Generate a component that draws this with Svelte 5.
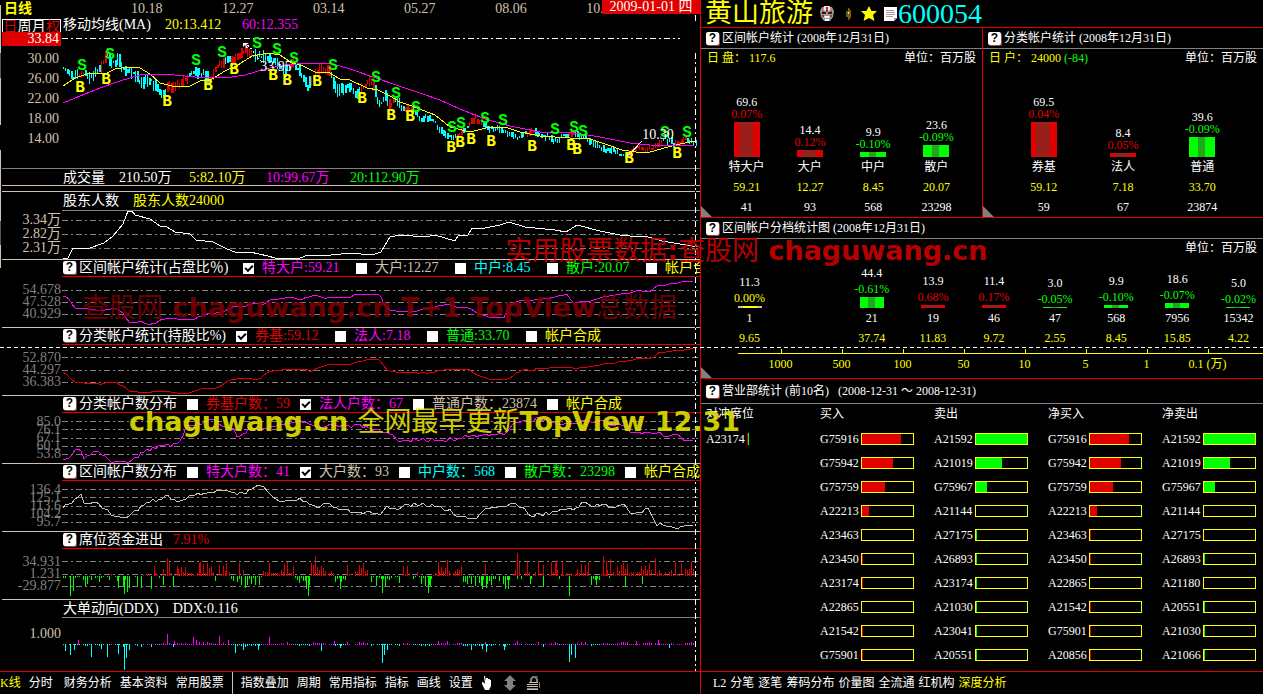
<script lang="ts">
  type Pt = [number, number];

  // chart space: x runs 62..700, y is the row offset inside the terminal
  const X0 = 62;
  const W = 638;

  const dates = ['10.18', '12.27', '03.14', '05.27', '08.06', '10.23'];
  const prices = ['30.00', '26.00', '22.00', '18.00', '14.00'];

  const ma20 = '63,86 75,78 90,73 105,74 115,69 130,67 140,68 150,74 160,83 172,86 188,87 200,81 212,79 225,71 238,65 252,56 268,53 280,55 292,63 303,66 315,72 328,72 340,79 350,80 367,88 378,90 390,96 400,102 412,106 435,115 450,127 470,132 490,127 505,127 520,132 540,136 570,138 590,139 605,144 622,150 636,152 650,152 668,147 680,144 690,142 696,141';
  const ma60 = '63,103 80,96 100,88 120,81 140,75 165,74 195,77 225,78 245,75 265,69 285,65 310,63 333,64 350,69 376,78 396,85 420,93 440,100 460,109 485,119 510,126 540,132 575,133 600,137 630,143 650,145 694,146';

  const pricePath: Pt[] = [[63, 69], [72, 77], [85, 73], [92, 78], [98, 70], [104, 62], [107, 52], [110, 64], [118, 60], [124, 70], [133, 73], [140, 82], [150, 80], [156, 88], [163, 96], [167, 87], [178, 85], [186, 78], [195, 71], [205, 74], [210, 80], [218, 65], [225, 60], [235, 59], [246, 48], [252, 55], [265, 57], [275, 62], [283, 71], [292, 63], [300, 72], [307, 87], [315, 74], [320, 67], [330, 72], [336, 91], [350, 86], [355, 95], [362, 86], [372, 80], [378, 106], [385, 97], [390, 105], [395, 100], [403, 109], [412, 108], [418, 118], [430, 118], [440, 130], [452, 139], [460, 132], [466, 128], [475, 118], [485, 125], [492, 129], [500, 128], [510, 135], [518, 138], [530, 132], [545, 136], [555, 140], [565, 136], [573, 134], [585, 137], [592, 143], [602, 149], [615, 152], [629, 155], [636, 147], [645, 149], [655, 146], [665, 139], [678, 145], [685, 138], [695, 142]];
  const rises: Pt[] = [[78, 84], [101, 106], [166, 188], [208, 224], [230, 252], [290, 293], [311, 330], [360, 374], [388, 393], [405, 412], [456, 461], [468, 482], [526, 534], [568, 574], [628, 662], [674, 686]];

  const sells: Pt[] = [[82, 65], [110, 54], [196, 60], [222, 52], [257, 43], [277, 49], [294, 58], [333, 65], [376, 77], [396, 93], [416, 107], [452, 127], [461, 123], [485, 118], [503, 120], [555, 129], [574, 127], [583, 131], [665, 132], [687, 132]];
  const buys: Pt[] = [[80, 87], [106, 79], [167, 101], [208, 85], [234, 69], [273, 75], [287, 80], [317, 81], [362, 98], [391, 115], [410, 116], [451, 147], [460, 142], [471, 139], [491, 141], [532, 146], [571, 145], [577, 149], [629, 158], [677, 153]];

  const rnd = (n: number) => {
    const v = Math.sin(n * 12.9898) * 43758.5453;
    return v - Math.floor(v);
  };

  function at(path: Pt[], x: number) {
    const i = path.findIndex((p) => p[0] >= x);
    if (i <= 0) return path[0][1];
    const [xa, ya] = path[i - 1];
    const [xb, yb] = path[i];
    return ya + ((yb - ya) * (x - xa)) / (xb - xa);
  }

  // daily wobble on top of a coarse line
  function rough(points: string, amount: number) {
    const path = points.split(' ').map((p) => p.split(',').map(Number) as Pt);
    const out: string[] = [];
    for (let x = 63; x <= 694; x += 3) {
      out.push(`${x},${Math.round(at(path, x) + (rnd(x + 17) - 0.5) * amount)}`);
    }
    return out.join(' ');
  }

  // one candle every 2px, red inside the rising stretches
  const candles: { x: number; y: number; w: number; h: number; up: boolean }[] = [];
  for (let x = 63; x < 696; x += 2) {
    const span = x < 400 ? 11 : 5;
    const h = Math.round(2 + rnd(x) * span);
    candles.push({
      x,
      y: Math.round(at(pricePath, x) - h / 2 + (rnd(x + 7) - 0.5) * 4),
      w: rnd(x + 23) > 0.6 ? 2 : 1,
      h,
      up: rises.some(([a, b]) => x >= a && x <= b)
    });
  }

  const seatPeaks: Pt[] = [[154, 10], [167, 18], [169, 14], [178, 7], [200, 14], [219, 11], [226, 13], [239, 13], [269, 13], [284, 12], [293, 10], [311, 13], [315, 20], [438, 14], [447, 16], [517, 23], [519, 14], [527, 14], [538, 14], [543, 11], [551, 14], [556, 16], [562, 14], [588, 14], [603, 20], [606, 15], [610, 17], [617, 10], [641, 10], [655, 18], [675, 14], [681, 13], [70, -20], [73, -15], [118, -12], [124, -18], [127, -16], [129, -12], [163, -9], [306, -13], [308, -20], [340, -13], [376, -10], [382, -17], [385, -10], [428, -17], [430, -10], [471, -8], [482, -13], [486, -12], [505, -9], [508, -13], [530, -8], [569, -20], [596, -9], [625, -11], [642, -8]];
  const ddxPeaks: Pt[] = [[78, 5], [167, 11], [174, 4], [193, 8], [196, 5], [219, 9], [228, 5], [269, 8], [334, 4], [438, 4], [447, 4], [517, 4], [538, 3], [636, 4], [658, 5], [65, -7], [70, -11], [74, -6], [91, -13], [101, -5], [107, -13], [118, -10], [124, -26], [126, -14], [129, -6], [235, -9], [243, -6], [258, -6], [321, -7], [340, -4], [382, -19], [384, -11], [387, -6], [471, -6], [482, -5], [486, -8], [504, -6], [569, -18], [571, -11], [575, -14], [669, -4]];

  const falling: Pt[] = [[60, 141], [230, 262], [295, 310], [335, 345], [373, 402], [413, 430], [462, 512], [590, 600]];

  function bars(peaks: Pt[], low: number) {
    const out: Pt[] = [];
    for (let x = 63; x < 697; x += 2) {
      if (rnd(x + 31) < 0.2) continue;
      const down = falling.some(([a, b]) => x >= a && x <= b);
      const sign = rnd(x + 11) < (down ? 0.95 : 0.08) ? -1 : 1;
      out.push([x, sign * Math.ceil(rnd(x + 5) * rnd(x + 9) * low)]);
    }
    return [...out, ...peaks];
  }

  const seatBars = bars(seatPeaks, 15);
  const ddxBars = bars(ddxPeaks, 3);

  type Item = { text: string; color: string; checked?: boolean };
  const panels: {
    top: number; title: string; axis: string[]; grid: number[]; color: string; line: string; dense?: boolean; items: Item[];
  }[] = [
    {
      top: 277,
      title: '区间帐户统计(占盘比％)',
      axis: ['54.678', '47.528', '40.929'],
      grid: [290, 302, 314],
      color: 'magenta',
      line: '63,296 68,298 75,308 85,308 95,310 105,310 115,307 122,312 130,323 140,321 148,325 158,322 163,319 172,318 185,319 195,319 203,314 222,312 235,306 243,306 255,303 265,304 272,299 290,297 300,299 315,295 325,298 335,297 350,297 358,294 380,294 385,306 390,310 410,312 425,309 447,304 452,306 468,308 480,314 490,317 505,318 508,306 520,301 550,298 567,294 572,302 590,301 610,295 630,293 640,290 650,292 655,286 670,284 685,281 694,281',
      items: [
        { text: '特大户:59.21', color: 'magenta', checked: true },
        { text: '大户:12.27', color: 'tan' },
        { text: '中户:8.45', color: 'cyan' },
        { text: '散户:20.07', color: 'green' },
        { text: '帐户合成', color: 'yellow' }
      ]
    },
    {
      top: 345,
      title: '分类帐户统计(持股比%)',
      axis: ['52.870', '44.297', '36.383'],
      grid: [357, 370, 382],
      color: 'red',
      line: '63,372 68,376 74,382 100,384 112,381 122,385 130,391 145,393 160,391 190,393 203,388 218,388 228,381 240,378 260,379 270,371 285,369 305,369 310,371 325,365 350,364 370,359 379,359 388,371 430,373 447,369 468,369 475,374 488,379 508,379 522,370 560,367 580,368 605,364 625,361 640,358 650,359 660,352 680,350 694,348',
      items: [
        { text: '券基:59.12', color: 'red', checked: true },
        { text: '法人:7.18', color: 'magenta' },
        { text: '普通:33.70', color: 'green' },
        { text: '帐户合成', color: 'yellow' }
      ]
    },
    {
      top: 413,
      title: '分类帐户数分布',
      axis: ['85.0', '76.1', '67.1', '60.1', '53.8'],
      grid: [421, 429, 438, 446, 454],
      color: 'magenta',
      dense: true,
      line: '63,459 68,460 73,451 78,448 84,457 97,452 104,453 110,460 125,461 135,459 142,452 155,448 166,444 171,447 182,438 186,427 200,424 213,418 220,426 233,428 239,438 247,430 265,429 280,423 300,421 312,424 320,427 335,425 350,427 358,424 370,429 390,433 400,441 420,439 440,440 460,438 470,436 495,434 505,434 512,425 540,418 560,426 580,421 600,421 620,425 632,432 650,433 658,431 668,437 678,434 684,440 694,439',
      items: [
        { text: '券基户数：59', color: 'red' },
        { text: '法人户数：67', color: 'magenta', checked: true },
        { text: '普通户数：23874', color: 'tan' },
        { text: '帐户合成', color: 'yellow' }
      ]
    },
    {
      top: 481,
      title: '区间帐户数分布',
      axis: ['136.4', '125.1', '113.6', '104.2', '95.7'],
      grid: [489, 497, 506, 514, 522],
      color: 'tan',
      dense: true,
      line: '63,507 70,503 75,499 80,494 85,503 98,504 107,508 112,514 124,517 133,513 140,508 150,501 163,500 166,493 170,500 185,500 194,494 207,493 225,490 233,493 245,493 259,484 268,493 280,500 298,499 312,504 320,507 323,502 338,508 350,511 358,513 372,512 379,516 386,506 393,509 405,505 420,504 435,506 445,508 455,514 466,518 475,519 482,511 487,508 500,507 512,503 520,508 532,515 545,514 555,512 570,509 575,508 584,502 590,505 610,506 625,506 632,514 648,509 655,520 656,525 662,523 668,526 675,529 684,525 694,524',
      items: [
        { text: '特大户数：41', color: 'magenta' },
        { text: '大户数：93', color: 'tan', checked: true },
        { text: '中户数：568', color: 'cyan' },
        { text: '散户数：23298', color: 'green' },
        { text: '帐户合成', color: 'yellow' }
      ]
    }
  ];

  const holders = '63,258 68,258 73,248 90,248 104,243 113,236 123,224 128,211 132,211 135,215 150,219 160,226 167,227 175,232 190,234 196,240 213,242 227,249 235,252 250,252 268,256 275,258 300,258 308,255 322,256 350,253 372,255 381,252 390,237 400,235 425,237 435,235 455,241 458,236 468,235 472,228 480,229 500,225 509,222 525,227 555,230 566,232 577,225 600,231 620,235 640,237 645,236 662,241 680,244 698,247';

  type Col = { value: string; pct: string; tone: string; h: number; rows: string[] };
  const range: Col[] = [
    { value: '69.6', pct: '0.07%', tone: 'red', h: 35, rows: ['特大户', '59.21', '41'] },
    { value: '14.4', pct: '0.12%', tone: 'red', h: 7, rows: ['大户', '12.27', '93'] },
    { value: '9.9', pct: '-0.10%', tone: 'green', h: 5, rows: ['中户', '8.45', '568'] },
    { value: '23.6', pct: '-0.09%', tone: 'green', h: 12, rows: ['散户', '20.07', '23298'] }
  ];
  const kinds: Col[] = [
    { value: '69.5', pct: '0.04%', tone: 'red', h: 35, rows: ['券基', '59.12', '59'] },
    { value: '8.4', pct: '0.05%', tone: 'red', h: 4, rows: ['法人', '7.18', '67'] },
    { value: '39.6', pct: '-0.09%', tone: 'green', h: 20, rows: ['普通', '33.70', '23874'] }
  ];
  const tiers: (Col | null)[] = [
    { value: '11.3', pct: '0.00%', tone: 'yellow', h: 2, rows: ['1', '9.65'] },
    null,
    { value: '44.4', pct: '-0.61%', tone: 'green', h: 11, rows: ['21', '37.74'] },
    { value: '13.9', pct: '0.68%', tone: 'red', h: 3, rows: ['19', '11.83'] },
    { value: '11.4', pct: '0.17%', tone: 'red', h: 3, rows: ['46', '9.72'] },
    { value: '3.0', pct: '-0.05%', tone: 'green', h: 1, rows: ['47', '2.55'] },
    { value: '9.9', pct: '-0.10%', tone: 'green', h: 3, rows: ['568', '8.45'] },
    { value: '18.6', pct: '-0.07%', tone: 'green', h: 5, rows: ['7956', '15.85'] },
    { value: '5.0', pct: '-0.02%', tone: 'green', h: 1, rows: ['15342', '4.22'] }
  ];
  const scale = ['1000', '500', '100', '50', '10', '5', '1', '0.1 (万)'];

  const seatHeads = ['对冲席位', '买入', '卖出', '净买入', '净卖出'];
  const seatCols: { tone: string; rows: [string, number][] }[] = [
    { tone: 'red', rows: [['G75916', 77], ['G75942', 60], ['G75759', 45], ['A22213', 14], ['A23463', 0], ['A23450', 2], ['A23174', 2], ['A22865', 0], ['A21542', 2], ['G75901', 2]] },
    { tone: 'green', rows: [['A21592', 100], ['A21019', 50], ['G75967', 21], ['A21144', 0], ['A27175', 2], ['A26893', 2], ['A23174', 2], ['A21030', 2], ['A23041', 2], ['A20551', 2]] },
    { tone: 'red', rows: [['G75916', 77], ['G75942', 60], ['G75759', 45], ['A22213', 14], ['A23463', 2], ['A23450', 2], ['A22865', 0], ['A21542', 2], ['G75901', 2], ['A20856', 2]] },
    { tone: 'green', rows: [['A21592', 100], ['A21019', 50], ['G75967', 21], ['A21144', 0], ['A27175', 0], ['A26893', 2], ['A21180', 0], ['A20551', 2], ['A21030', 2], ['A21066', 2]] }
  ];

  const pct = (x: number) => ((x - X0) / W) * 100;

  // text occupies terminal cells: 7px for ascii, 14px for full width
  const cells = (t: string) => [...t].reduce((n, c) => n + (c.charCodeAt(0) < 256 ? 7 : 14), 0);
</script>

{#snippet help()}
  <button class="help" aria-label="帮助">?</button>
{/snippet}

{#snippet cell(text: string, color: string)}
  <span class={color} style="min-width: {cells(text)}px">{text}</span>
{/snippet}

{#snippet gridLines(ys: number[])}
  {#each ys as y}
    <line class="grid-line" x1={X0} x2={X0 + W} y1={y + 0.5} y2={y + 0.5} />
  {/each}
{/snippet}

{#snippet column(c: Col)}
  <div class="col">
    <span class="num">{c.value}</span>
    <span class="num {c.tone}">{c.pct}</span>
    <div class="bar bar-{c.tone}" style="height: {c.h}px"></div>
    {#each c.rows as r}
      <span class="row" class:yellow={r.includes('.')}>{r}</span>
    {/each}
  </div>
{/snippet}

<main class="terminal">
  <div class="left">
    <header class="dates">
      <strong class="yellow">日线</strong>
      <div class="date-list">
        {#each dates as d}<span>{d}</span>{/each}
      </div>
      <div class="today">2009-01-01 四</div>
    </header>

    <section class="kline">
      <div class="axis price">
        <div class="tabs">
          <button class="red">日</button><button>周</button><button>月</button><button class="red">权</button>
        </div>
        <span class="current">33.84</span>
        {#each prices as p}<span>{p}</span>{/each}
      </div>
      <div class="plot">
        <div class="title">
          {@render cell('移动均线(MA)', 'white')}
          {@render cell('20:13.412', 'yellow')}
          {@render cell('60:12.355', 'magenta')}
        </div>
        <div class="canvas">
          <svg height="136" viewBox="{X0} 32 {W} 136" preserveAspectRatio="none">
            <line class="top-line" x1={X0} x2="680" y1="38.5" y2="38.5" />
            {#each candles as c}
              <rect class={c.up ? 'red' : 'cyan'} x={c.x} y={c.y} width={c.w} height={c.h} />
            {/each}
            <polyline class="yellow" points={ma20} />
            <polyline class="magenta" points={ma60} />
            <polyline class="white" points="244,43 250,47 258,58 262,62" stroke-dasharray="2 2" />
            <path class="white-fill" d="M243 43h6l-3 2 2 3h-2l-1-3-2 2z" />
            <line class="white" x1="629" x2="642" y1="155" y2="141" />
          </svg>
          {#each sells as [x, y]}<b class="mark green" style="left: {pct(x)}%; top: {y - 31}px">S</b>{/each}
          <span class="mark peak" style="left: {pct(276)}%; top: 35px">33.95</span>
          <span class="mark peak" style="left: {pct(658)}%; top: 103px">10.30</span>
          {#each buys as [x, y]}<b class="mark yellow" style="left: {pct(x)}%; top: {y - 31}px">B</b>{/each}
        </div>
      </div>
    </section>

    <div class="volume title">
      {@render cell('成交量', 'white')}
      {@render cell('210.50万', 'white')}
      {@render cell('5:82.10万', 'yellow')}
      {@render cell('10:99.67万', 'magenta')}
      {@render cell('20:112.90万', 'green')}
    </div>

    <section class="panel holders">
      <div class="title">
        {@render cell('股东人数', 'white')}
        {@render cell('股东人数24000', 'yellow')}
      </div>
      <div class="axis"><span>3.34万</span><span>2.82万</span><span>2.31万</span></div>
      <svg height="48" viewBox="{X0} 211 {W} 48" preserveAspectRatio="none">
        {@render gridLines([220, 234, 248])}
        <polyline class="white" points={holders} />
      </svg>
    </section>

    {#each panels as p}
      <section class="panel">
        <div class="title options">
          {@render help()}
          {@render cell(p.title, 'white')}
          {#each p.items as it}
            <label class={it.color}>
              <input type="checkbox" checked={it.checked} />
              {@render cell(it.text, it.color)}
            </label>
          {/each}
        </div>
        <div class="axis gray" class:dense={p.dense}>
          {#each p.axis as a}<span>{a}</span>{/each}
        </div>
        <svg height="50" viewBox="{X0} {p.top} {W} 50" preserveAspectRatio="none">
          {@render gridLines(p.grid)}
          <polyline class={p.color} points={rough(p.line, p.dense ? 4 : 1)} />
        </svg>
      </section>
    {/each}

    <section class="panel">
      <div class="title options">
        {@render help()}
        {@render cell('席位资金进出', 'white')}
        {@render cell('7.91%', 'red')}
      </div>
      <div class="axis gray"><span>34.931</span><span>1.231</span><span>-29.877</span></div>
      <svg height="50" viewBox="{X0} 549 {W} 50" preserveAspectRatio="none">
        {@render gridLines([561, 574, 586])}
        {#each seatBars as [x, h]}
          <rect class={h > 0 ? 'red' : 'green'} {x} y={h > 0 ? 576 - h : 576} width="1" height={Math.abs(h)} />
        {/each}
      </svg>
    </section>

    <section class="panel ddx">
      <div class="title">
        {@render cell('大单动向(DDX)', 'white')}
        {@render cell('DDX:0.116', 'white')}
      </div>
      <div class="axis"><span>1.000</span></div>
      <svg height="53" viewBox="{X0} 618 {W} 53" preserveAspectRatio="none">
        {#each ddxBars as [x, h]}
          <rect class={h > 0 ? 'magenta' : 'cyan'} {x} y={h > 0 ? 645 - h : 644} width="1" height={Math.abs(h)} />
        {/each}
      </svg>
    </section>

    <nav class="toolbar">
      <button class="yellow">K线</button>
      <button>分时</button>
      <button class="gap">财务分析</button>
      <button>基本资料</button>
      <button>常用股票</button>
      <i class="sep"></i>
      <button>指数叠加</button>
      <button>周期</button>
      <button>常用指标</button>
      <button>指标</button>
      <button>画线</button>
      <button>设置</button>
      <button aria-label="拖动">
        <svg width="12" height="14" viewBox="0 0 12 14"><path fill="#fff" d="M3 0h1l1 5V2h2v3-2h2v3-2h1v6l-2 4H4L1 8V6h1l2 2z" /></svg>
      </button>
      <button class="gap" aria-label="缩放">
        <svg width="12" height="16" viewBox="0 0 12 16"><path fill="#808080" d="M6 0l6 6H9v4h3l-6 6-6-6h3V6H0z" /></svg>
      </button>
      <button class="gap" aria-label="锁定">
        <svg width="14" height="14" viewBox="0 0 14 14">
          <path d="M4 6V3l2-2h2l2 2v3" fill="none" stroke="#808080" stroke-width="2" />
          <path d="M2 6.500h9M0 8.500h11M0 10.500h11M0 13.500h11" stroke="#d0c0b0" />
          <path d="M0 12.500h11M12.500 6v6" stroke="#808080" />
          <path d="M9 1l2-1" stroke="#20a8a0" />
        </svg>
      </button>
    </nav>
    <i class="cross-v top"></i>
    <i class="cross-v"></i>
  </div>

  <div class="right">
    <header class="stock">
      <h1>黄山旅游</h1>
      <svg class="mask" width="14" height="16" viewBox="0 0 14 16">
        <path d="M2 1h10l2 4-1 6-3 4H4l-3-4-1-6z" fill="#999" />
        <path d="M4 0h6v4L7 6 4 4z" fill="#e8e8e8" />
        <path d="M6 1h2v5H6zM2 4l3 3-3-1zM12 4L9 7l3-1zM2 9h2v2H2zM10 9h2v2h-2z" fill="#d02020" />
        <path d="M2 6h4v2H2zM8 6h4v2H8z" fill="#222" />
        <path d="M4 10h6l-1 2H5zM5 13h4v2H5z" fill="#fff" />
      </svg>
      <svg class="coin" width="6" height="14" viewBox="0 0 6 14">
        <path d="M3 1h1l2 3v6l-2 3H3z" fill="#806000" /><path d="M1 4h2v6H1z" fill="#705818" /><path d="M3 5h1v2H3z" fill="#ddd" />
      </svg>
      <svg class="star" width="16" height="16" viewBox="0 0 16 16"><path fill="#ff0" d="M8 0l2.500 5H16l-4 4 1.500 6L8 12l-5.500 3L4 9 0 5h5.500z" /></svg>
      <svg class="doc" width="13" height="14" viewBox="0 0 13 14">
        <path d="M0 0h13v11l-3 3H0z" fill="#fff" /><path d="M2 3.500h8M2 5.500h9M2 7.500h9M2 9.500h7" stroke="#b09890" /><path d="M10 14v-3h3z" fill="#999" />
      </svg>
      <span class="code">600054</span>
    </header>

    <div class="pair">
      <section class="card">
        <h2>{@render help()}区间帐户统计 (2008年12月31日)</h2>
        <div class="info"><span class="yellow">日 盘： 117.6</span><span>单位：百万股</span></div>
        <div class="cols four">{#each range as c}{@render column(c)}{/each}</div>
      </section>
      <section class="card">
        <h2>{@render help()}分类帐户统计 (2008年12月31日)</h2>
        <div class="info"><span class="yellow">日 户： 24000 <span class="green">(-84)</span></span><span>单位：百万股</span></div>
        <div class="cols three">{#each kinds as c}{@render column(c)}{/each}</div>
      </section>
    </div>

    <section class="card tiers">
      <h2>{@render help()}区间帐户分档统计图 (2008年12月31日)</h2>
      <div class="info"><span></span><span>单位：百万股</span></div>
      <div class="cols nine">
        {#each tiers as c}
          {#if c}{@render column(c)}{:else}<div class="col"></div>{/if}
        {/each}
      </div>
      <div class="scale">
        {#each scale as s}<span>{s}</span>{/each}
      </div>
    </section>

    <section class="card seats">
      <h2>{@render help()}营业部统计 (前10名) &nbsp; (2008-12-31 ～ 2008-12-31)</h2>
      <table>
        <thead>
          <tr>{#each seatHeads as h}<th>{h}</th>{/each}</tr>
        </thead>
        <tbody>
          {#each seatCols[0].rows as _, i}
            <tr>
              <td>
                {#if i === 0}<div class="seat-row"><span>A23174</span><i class="hedge"></i></div>{/if}
              </td>
              {#each seatCols as c}
                <td>
                  <div class="seat-row">
                    <span>{c.rows[i][0]}</span>
                    <div class="meter"><div class="fill-{c.tone}" style="width: {c.rows[i][1]}%"></div></div>
                  </div>
                </td>
              {/each}
            </tr>
          {/each}
        </tbody>
      </table>
    </section>

    <nav class="toolbar tight">
      <button>L2</button>
      <button>分笔</button>
      <button>逐笔</button>
      <button>筹码分布</button>
      <button>价量图</button>
      <button>全流通</button>
      <button>红机构</button>
      <button class="yellow">深度分析</button>
    </nav>
  </div>

  <i class="cross-h"></i>
  <div class="stamp stamp-data"><span>实用股票数据</span>:<span>查股网</span> chaguwang.cn</div>
  <div class="stamp stamp-total"><span>查股网</span> chaguwang.cn T+1 TopView<span>总数据</span></div>
  <div class="stamp stamp-first">chaguwang.cn <span>全网最早更新</span>TopView 12.31</div>
</main>

<style>
  :global(body) {
    background: #000;
  }

  .terminal {
    position: relative;
    display: grid;
    grid-template-columns: 700fr 563fr;
    min-height: 100vh;
    overflow: hidden;
    background: #000;
    color: #fff;
    font: 14px "Liberation Serif", "Noto Sans CJK SC", serif;
    white-space: nowrap;
  }

  button {
    padding: 0;
    border: 0;
    background: none;
    color: #fff;
    font: inherit;
    line-height: inherit;
    cursor: pointer;
  }

  svg {
    display: block;
  }

  .yellow { color: #ff0; }
  .magenta { color: #f0f; }
  .green { color: #0f0; }
  .cyan { color: #0ff; }
  .red { color: #e00000; }
  .tan { color: #d0c0b0; }
  .white { color: #fff; }

  rect {
    fill: currentColor;
  }

  polyline,
  line {
    fill: none;
    stroke: currentColor;
    vector-effect: non-scaling-stroke;
    shape-rendering: crispEdges;
  }

  .white-fill {
    fill: #fff;
  }

  .grid-line {
    stroke: #808080;
    stroke-dasharray: 6 3 2 3;
  }

  .top-line {
    stroke: #fff;
    stroke-dasharray: 6 3 2 3;
  }

  /* left half */
  .left {
    position: relative;
    min-width: 0;
    overflow: hidden;
    background: linear-gradient(#000 5px, #d0c0b0 5px 53px, #555 53px 78px, #d0c0b0 78px 125px, #000 125px 150px, #d0c0b0 150px 221px, #555 221px 245px, #d0c0b0 245px 268px, #000 268px) 0 0 / 1px 100% no-repeat;
  }

  .dates {
    position: relative;
    display: flex;
    height: 17px;
    line-height: 17px;
    color: #d0c0b0;
  }

  .dates strong {
    flex: 0 0 127px;
    padding-left: 4px;
  }

  .date-list {
    display: flex;
    flex: 1;
    overflow: hidden;
  }

  .date-list span {
    flex: 0 0 16%;
  }

  .today {
    position: absolute;
    top: 0;
    right: 0;
    width: 98px;
    height: 14px;
    line-height: 14px;
    text-align: center;
    background: #e00000;
    color: #fff;
  }

  .kline {
    display: grid;
    grid-template-columns: 62px 1fr;
    height: 151px;
  }

  .axis {
    display: flex;
    flex-direction: column;
    padding: 7px 1px 0 0;
    line-height: 12px;
    text-align: right;
    color: #d0c0b0;
  }

  .axis.gray {
    color: #808080;
  }

  .axis.dense {
    padding-top: 5px;
    line-height: 8px;
  }

  .axis.price {
    padding: 2px 1px 0 2px;
    line-height: 20px;
  }

  .axis.price > span {
    padding-right: 2px;
  }

  .tabs {
    display: flex;
    box-sizing: border-box;
    height: 13px;
    border: 1px solid #fff;
    border-bottom: 0;
    line-height: 13px;
  }

  .tabs button {
    flex: 1;
  }

  .tabs .red {
    color: #e00000;
  }

  .axis.price .current {
    height: 14px;
    margin-bottom: 3px;
    line-height: 14px;
    background: #e00000;
    color: #fff;
  }

  .title {
    display: flex;
    gap: 14px;
    height: 15px;
    padding-left: 1px;
    line-height: 15px;
  }

  .canvas {
    position: relative;
    height: 136px;
  }

  .canvas svg,
  .panel > svg {
    width: 100%;
  }

  .mark {
    position: absolute;
    transform: translate(-50%, -50%);
    line-height: 14px;
  }

  .mark:is(b) {
    font-family: "Liberation Mono", monospace;
    font-size: 16px;
  }

  .volume {
    height: 16px;
    margin: 0 0 5px 2px;
    padding-left: 61px;
    border-top: 1px solid #808080;
    border-bottom: 1px solid #d0c0b0;
    line-height: 17px;
  }

  .panel {
    display: grid;
    grid-template-columns: 60px minmax(0, 1fr);
    margin-left: 2px;
    border-top: 1px solid #d0c0b0;
  }

  .panel > .title {
    grid-column: 2;
    height: 18px;
    border-bottom: 1px solid #808080;
    line-height: 17px;
  }

  .panel > .axis {
    grid-column: 1;
  }

  .panel.holders > .axis {
    padding-top: 2px;
    line-height: 14px;
  }

  .panel.ddx > .title {
    height: 17px;
  }

  .panel.ddx > .axis {
    padding-top: 10px;
  }

  .panel > .options {
    gap: 10px;
    height: 16px;
    border-bottom-color: #e00000;
    line-height: 16px;
  }

  .options > .help {
    margin-right: -7px;
  }

  .options label {
    display: flex;
    gap: 8px;
  }

  input[type='checkbox'] {
    appearance: none;
    position: relative;
    width: 11px;
    height: 11px;
    margin: 3px 0 0;
    background: #fff;
  }

  input[type='checkbox']:checked::before {
    content: '';
    position: absolute;
    left: 2px;
    top: 2px;
    width: 6px;
    height: 3px;
    border: solid #000;
    border-width: 0 0 2px 2px;
    transform: rotate(-45deg);
  }

  .help {
    flex: none;
    width: 13px;
    height: 13px;
    margin-top: 1px;
    border-radius: 2px;
    background: #fff;
    box-shadow: 1px 1px 0 #a04038;
    color: #000;
    font: bold 12px/13px "Liberation Sans", sans-serif;
    text-align: center;
  }

  .toolbar {
    display: flex;
    align-items: center;
    gap: 8px;
    height: 22px;
    border-top: 1px solid #e00000;
    font-size: 12px;
    line-height: 22px;
  }

  .toolbar .gap {
    margin-left: 3px;
  }

  .toolbar .yellow {
    color: #ff0;
  }

  .toolbar.tight {
    gap: 4px;
    padding-left: 12px;
  }

  .sep {
    align-self: stretch;
    width: 1px;
    background: #d0c0b0;
  }

  /* crosshair */
  .cross-v {
    position: absolute;
    top: 53px;
    right: 4px;
    bottom: 23px;
    width: 1px;
    background: repeating-linear-gradient(#fff 0 6px, #000 6px 9px, #fff 9px 11px, #000 11px 14px);
  }

  .cross-v.top {
    top: 15px;
    bottom: auto;
    height: 8px;
  }

  .cross-h {
    position: absolute;
    top: 347px;
    left: 0;
    right: 0;
    height: 1px;
    background: repeating-linear-gradient(90deg, #fff 0 4px, #000 4px 7px);
  }

  /* right half */
  .right {
    min-width: 0;
    overflow: hidden;
    border-left: 1px solid #e00000;
    font-size: 12px;
  }

  .stock {
    display: flex;
    align-items: center;
    height: 27px;
    padding-left: 4px;
  }

  .stock h1 {
    margin: 0 7px 0 0;
    font-size: 27px;
    font-weight: normal;
    line-height: 27px;
    color: #ff0;
  }

  .mask { margin-right: 11px; }
  .coin { margin-right: 10px; }
  .star { margin-right: 7px; }
  .doc { margin-right: 1px; }

  .code {
    font-size: 28px;
    line-height: 27px;
    color: #0ff;
  }

  .pair {
    display: grid;
    grid-template-columns: 1fr 1fr;
  }

  .card {
    position: relative;
    min-width: 0;
    border-top: 1px solid #e00000;
  }

  .pair > .card + .card {
    border-left: 1px solid #e00000;
  }

  .pair > .card::after,
  .tiers::after {
    content: '';
    position: absolute;
    left: 0;
    bottom: 0;
    border: solid transparent;
    border-width: 11px 0 0 11px;
    border-left-color: #808080;
  }

  .card h2 {
    display: flex;
    align-items: center;
    gap: 3px;
    height: 20px;
    margin: 0;
    padding-left: 5px;
    border-bottom: 1px solid #808080;
    font-size: 12px;
    font-weight: normal;
    line-height: 20px;
  }

  .card .help {
    margin-top: 0;
  }

  .info {
    display: flex;
    justify-content: space-between;
    height: 18px;
    padding: 0 6px;
    line-height: 18px;
  }

  .cols {
    display: flex;
    height: 150px;
  }

  .cols.four { padding: 0 14px; }
  .cols.three { padding: 0 21px; }

  .cols.nine {
    height: 91px;
    margin-right: -6px;
    padding-left: 18px;
  }

  .col {
    display: flex;
    flex: 1;
    flex-direction: column;
    align-items: center;
    justify-content: flex-end;
  }

  .num {
    line-height: 12px;
  }

  .nine .num {
    line-height: 16px;
  }

  .row {
    line-height: 20px;
  }

  .bar {
    flex: none;
    width: 26px;
    margin-top: 2px;
  }

  .nine .bar {
    width: 24px;
    margin-top: 0;
  }

  .bar-red { background: linear-gradient(90deg, #e00000 20%, #9a1f1a 20% 72%, #e00000 72%); }
  .bar-green { background: linear-gradient(90deg, #0f0 35%, #20a81c 35% 62%, #0f0 62%); }
  .bar-yellow { background: linear-gradient(90deg, #d0c0b0 20%, #ff0 20% 80%, #d0c0b0 80%); }

  .scale {
    display: flex;
    height: 24px;
    margin: 5px -6px 0 37px;
    padding: 0 31px 0 12px;
    border-top: 1px solid #ff0;
    color: #ff0;
    line-height: 20px;
  }

  .scale span {
    position: relative;
    flex: 1 0 0;
    text-align: center;
  }

  .scale span::before {
    content: '';
    position: absolute;
    left: 50%;
    top: -5px;
    width: 1px;
    height: 4px;
    background: #ff0;
  }

  .seats h2 {
    height: 24px;
    line-height: 24px;
  }

  table {
    width: calc(100% - 5px);
    margin: 0 0 4px 5px;
    border-collapse: collapse;
    table-layout: fixed;
  }

  th {
    padding: 0 0 3px;
    font-weight: normal;
    line-height: 20px;
    text-align: left;
  }

  th:not(:last-child) {
    width: 114px;
  }

  td {
    height: 24px;
    padding: 0;
  }

  .seat-row {
    display: flex;
    align-items: center;
    line-height: 24px;
  }

  .seat-row > span {
    flex: 0 0 41px;
  }

  .meter {
    box-sizing: border-box;
    flex: 0 0 53px;
    height: 12px;
    border: 1px solid #ff0;
  }

  .meter > div {
    height: 100%;
  }

  .fill-red { background: #e00000; }
  .fill-green { background: #0f0; }

  .hedge {
    width: 1px;
    height: 12px;
    border-left: 1px solid #a00000;
    background: #0f0;
  }

  /* site stamps laid over the screen */
  .stamp {
    position: absolute;
    font: bold 27px/34px "DejaVu Sans", "Noto Sans CJK SC", sans-serif;
    pointer-events: none;
  }

  .stamp span {
    font-weight: normal;
  }

  .stamp-data {
    top: 234px;
    left: 40%;
    color: rgba(208, 0, 0, 0.9);
  }

  .stamp-total {
    top: 291px;
    left: 82px;
    color: rgba(128, 0, 0, 0.85);
  }

  .stamp-first {
    top: 405px;
    left: 129px;
    color: rgba(224, 224, 0, 0.93);
  }
</style>
